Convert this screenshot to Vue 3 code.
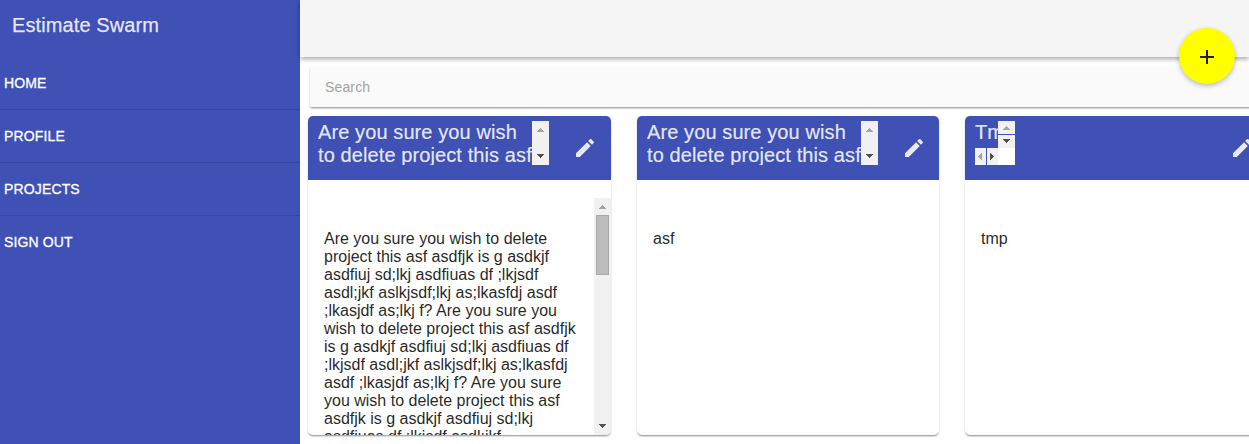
<script setup>
const links = ['HOME', 'PROFILE', 'PROJECTS', 'SIGN OUT']

const longLines = [
  'Are you sure you wish to delete',
  'project this asf asdfjk is g asdkjf',
  'asdfiuj sd;lkj asdfiuas df ;lkjsdf',
  'asdl;jkf aslkjsdf;lkj as;lkasfdj asdf',
  ';lkasjdf as;lkj f? Are you sure you',
  'wish to delete project this asf asdfjk',
  'is g asdkjf asdfiuj sd;lkj asdfiuas df',
  ';lkjsdf asdl;jkf aslkjsdf;lkj as;lkasfdj',
  'asdf ;lkasjdf as;lkj f? Are you sure',
  'you wish to delete project this asf',
  'asdfjk is g asdkjf asdfiuj sd;lkj',
  'asdfiuas df ;lkjsdf asdl;jkf'
]

const projects = [
  { title: ['Are you sure you wish', 'to delete project this asf'], body: longLines, scroll: true },
  { title: ['Are you sure you wish', 'to delete project this asf'], body: ['asf'] },
  { title: ['Tmp'], body: ['tmp'], small: true }
]
</script>

<template>
  <div class="app">
    <aside class="sidebar">
      <h1 class="brand">Estimate Swarm</h1>
      <nav class="nav">
        <a v-for="link in links" :key="link" class="nav-item">{{ link }}</a>
      </nav>
    </aside>
    <main class="main">
      <header class="toolbar">
        <button class="fab" aria-label="Add">
          <svg width="24" height="24" viewBox="0 0 24 24"><path d="M19 13h-6v6h-2v-6H5v-2h6V5h2v6h6v2z" /></svg>
        </button>
      </header>
      <div class="search">Search</div>
      <section class="cards">
        <article v-for="(p, i) in projects" :key="i" class="card">
          <div class="card-head">
            <div class="title-area">
              <div class="title" :class="{ small: p.small }">
                <div class="title-text">
                  <div v-for="line in p.title" :key="line">{{ line }}</div>
                </div>
                <div class="bar title-bar">
                  <span class="arrow"><svg class="up" width="7" height="4"><path d="M3 0h1v1h1v1h1v1h1v1H0V3h1V2h1V1h1z" /></svg></span>
                  <span class="arrow"><svg class="down" width="7" height="4"><path d="M0 0h7v1H6v1H5v1H4v1H3V3H2V2H1V1H0z" /></svg></span>
                </div>
                <div v-if="p.small" class="hbar">
                  <span class="harrow"><svg class="off" width="4" height="7"><path d="M4 0v7H3V6H2V5H1V4H0V3h1V2h1V1h1V0z" /></svg></span>
                  <span class="harrow"><svg width="4" height="7"><path d="M0 0h1v1h1v1h1v1h1v1H3v1H2v1H1v1H0z" /></svg></span>
                  <span class="corner"></span>
                </div>
              </div>
            </div>
            <svg class="edit" width="24" height="24" viewBox="0 0 24 24">
              <path d="M3 17.25V21h3.75L17.81 9.94l-3.75-3.75L3 17.25zM20.71 7.04c.39-.39.39-1.02 0-1.41l-2.34-2.34c-.39-.39-1.02-.39-1.41 0l-1.83 1.83 3.75 3.75 1.83-1.83z" />
            </svg>
          </div>
          <div class="card-body">
            <div class="copy">
              <div v-for="(line, n) in p.body" :key="n">{{ line }}</div>
            </div>
            <div v-if="p.scroll" class="bar body-bar">
              <span class="arrow"><svg class="up" width="7" height="4"><path d="M3 0h1v1h1v1h1v1h1v1H0V3h1V2h1V1h1z" /></svg></span>
              <span class="thumb"></span>
              <span class="arrow last"><svg class="down" width="7" height="4"><path d="M0 0h7v1H6v1H5v1H4v1H3V3H2V2H1V1H0z" /></svg></span>
            </div>
          </div>
        </article>
      </section>
    </main>
  </div>
</template>

<style>
body { margin: 0; overflow: hidden; background: #fff; }
</style>

<style scoped>
.app {
  display: flex;
  width: 100%;
  height: 444px;
  overflow: hidden;
  font-family: "Liberation Sans", Arial, sans-serif;
}
.sidebar {
  flex: 0 0 300px;
  background: #3f51b5;
  color: rgba(255, 255, 255, .87);
}
.brand {
  margin: 0;
  padding: 0 12px;
  height: 57px;
  line-height: 50px;
  font-size: 20px;
  font-weight: 400;
  letter-spacing: .1px;
  -webkit-text-stroke: .25px rgba(255, 255, 255, .8);
}
.nav { display: flex; flex-direction: column; }
.nav-item {
  box-sizing: border-box;
  height: 53px;
  padding-left: 4px;
  line-height: 52px;
  font-size: 14px;
  letter-spacing: .14px;
  color: #fff;
  -webkit-text-stroke: .3px #fff;
  border-bottom: 1px solid rgba(0, 0, 0, .12);
}
.nav-item:last-child { border-bottom: 0; }
.main { flex: 1; min-width: 0; overflow: visible; }
.toolbar {
  position: relative;
  z-index: 2;
  height: 57px;
  background: #f5f5f5;
  box-shadow: 0 2px 5px rgba(0, 0, 0, .35);
}
.fab {
  position: absolute;
  right: 14px;
  top: 28px;
  width: 56px;
  height: 56px;
  padding: 2px 0 0;
  border: 0;
  border-radius: 50%;
  background: #ff0;
  box-shadow: 0 2px 5px rgba(0, 0, 0, .26);
  display: flex;
  align-items: center;
  justify-content: center;
}
.fab svg { fill: rgba(0, 0, 0, .87); }
.search {
  box-sizing: border-box;
  margin: 10px -10px 0 10px;
  height: 40px;
  padding-left: 15px;
  line-height: 40px;
  font-size: 14px;
  letter-spacing: .14px;
  color: #a2a2a2;
  background: #fafafa;
  box-shadow: 0 2px 2px -1px rgba(0, 0, 0, .3), 0 1px 2px rgba(0, 0, 0, .2);
}
.cards {
  display: grid;
  grid-template-columns: 303px 302px 303px;
  gap: 26px;
  padding: 9px 0 0 8px;
}
.card {
  height: 319px;
  border-radius: 5px;
  overflow: hidden;
  background: #fff;
  box-shadow: 0 2px 2px -1px rgba(0, 0, 0, .3), 0 1px 2px rgba(0, 0, 0, .2);
}
.card-head {
  box-sizing: border-box;
  height: 64px;
  padding: 5px 0 0 10px;
  display: flex;
  background: #3f51b5;
}
.title-area { flex: 0 0 255px; display: flex; align-items: flex-start; }
.title {
  display: grid;
  grid-template-columns: 214px 17px;
  height: 44px;
  overflow: hidden;
}
.title.small {
  grid-template-columns: 23px 17px;
  grid-template-rows: 27px 17px;
}
.title-text {
  overflow: hidden;
  white-space: nowrap;
  font-size: 20px;
  line-height: 23px;
  letter-spacing: .1px;
  color: rgba(255, 255, 255, .87);
  -webkit-text-stroke: .2px rgba(255, 255, 255, .8);
}
.bar {
  display: flex;
  flex-direction: column;
  background: #f1f1f1;
}
.arrow {
  flex: 0 0 17px;
  display: flex;
  align-items: flex-start;
  justify-content: center;
}
.arrow svg, .harrow svg { fill: #505050; shape-rendering: crispEdges; }
.arrow .up { margin-top: 7px; fill: #a3a3a3; }
.arrow .down { margin-top: 6px; }
.harrow .off { fill: #a3a3a3; }
.title-bar { justify-content: space-between; }
.small .title-bar { background: none; }
.small .arrow { flex-basis: 13px; background: #f1f1f1; }
.small .arrow .up { margin-top: 5px; }
.small .arrow .down { margin-top: 4px; }
.hbar {
  grid-column: 1 / 3;
  display: flex;
}
.harrow {
  box-sizing: border-box;
  width: 11px;
  padding: 5px 0 0 3px;
  display: flex;
  align-items: flex-start;
  background: #f1f1f1;
}
.harrow + .harrow { margin-left: 1px; }
.corner { flex: 1; background: #fff; }
.edit {
  flex: none;
  margin-top: 15px;
  fill: rgba(255, 255, 255, .87);
}
.card-body {
  height: 237px;
  padding-top: 18px;
  display: flex;
  justify-content: space-between;
}
.copy {
  padding: 32px 0 0 16px;
  white-space: nowrap;
  font-size: 16px;
  line-height: 18px;
  color: rgba(0, 0, 0, .87);
}
.body-bar { flex: 0 0 17px; }
.thumb {
  box-sizing: border-box;
  height: 60px;
  margin: 0 2px;
  background: #bcbcbc;
  border: 1px solid #a8a8a8;
}
.last { margin-top: auto; }
</style>
